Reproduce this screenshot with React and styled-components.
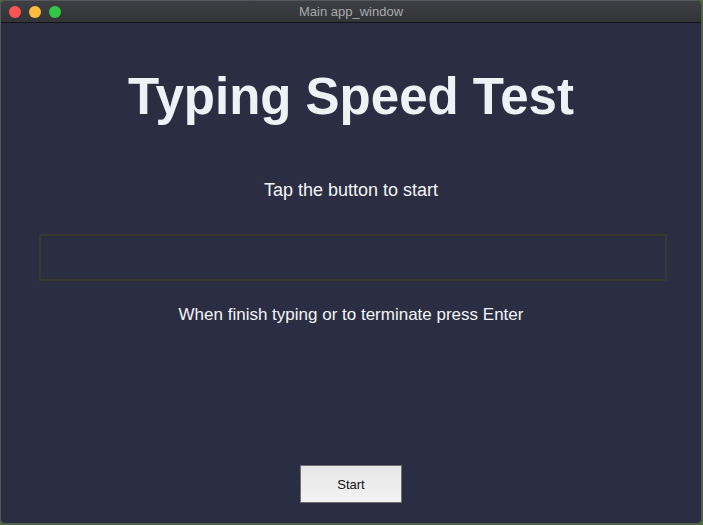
import React from "react";
import styled, { createGlobalStyle } from "styled-components";

const Global = createGlobalStyle`
  html, body {
    margin: 0;
    padding: 0;
    width: 703px;
    height: 525px;
    overflow: hidden;
    background: #4d6b3c;
  }
  #root { width: 703px; height: 525px; }
`;

const Window = styled.div`
  box-sizing: border-box;
  width: 702px;
  height: 524px;
  display: flex;
  flex-direction: column;
  border-radius: 5px;
  overflow: hidden;
  border: 1px solid #55575e;
  background: #2b2e42;
  font-family: "Liberation Sans", Arial, sans-serif;
`;

const TitleBar = styled.div`
  position: relative;
  height: 21px;
  flex: none;
  display: flex;
  align-items: center;
  justify-content: center;
  background: linear-gradient(#3d3f42, #323437);
  border-bottom: 1px solid #121316;
  color: #a9abae;
  font-size: 13px;
`;

const Lights = styled.div`
  position: absolute;
  left: 8px;
  top: 5px;
  display: flex;
  gap: 8px;
`;

const Light = styled.span`
  width: 12px;
  height: 12px;
  border-radius: 50%;
  background: ${(p) => p.$color};
`;

const Content = styled.div`
  flex: 1;
  display: flex;
  flex-direction: column;
  align-items: center;
  padding: 44px 0 20px;
`;

const Heading = styled.h1`
  margin: 0;
  font-size: 51px;
  line-height: 60px;
  font-weight: 700;
  color: #eef2f5;
`;

const Caption = styled.p`
  margin: ${(p) => p.$top}px 0 0;
  font-size: ${(p) => p.$size}px;
  line-height: 20px;
  color: #f3f4f7;
`;

const Entry = styled.input`
  box-sizing: border-box;
  margin-top: 34px;
  width: 628px;
  height: 47px;
  margin-left: 3px;
  background: #2b2e42;
  border: 2px solid #38382f;
  outline: none;
  color: #eef2f5;
  font-size: 16px;
`;

const StartButton = styled.button`
  margin-top: auto;
  width: 102px;
  height: 38px;
  background: linear-gradient(#e6e6e6, #f3f3f3);
  border: 1px solid #6f6f72;
  font-family: "Liberation Sans", Arial, sans-serif;
  font-size: 13px;
  color: #111;
  padding: 0;
`;

export default function App() {
  return (
    <>
      <Global />
      <Window>
        <TitleBar>
          <Lights>
            <Light $color="#fc5452" />
            <Light $color="#fdbc40" />
            <Light $color="#33c748" />
          </Lights>
          Main app_window
        </TitleBar>
        <Content>
          <Heading>Typing Speed Test</Heading>
          <Caption $top={53} $size={18}>Tap the button to start</Caption>
          <Entry />
          <Caption $top={24} $size={17}>When finish typing or to terminate press Enter</Caption>
          <StartButton>Start</StartButton>
        </Content>
      </Window>
    </>
  );
}
